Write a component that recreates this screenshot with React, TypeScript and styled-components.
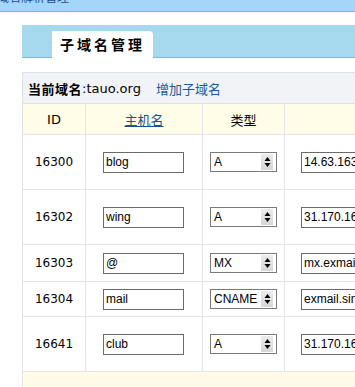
import React from 'react';
import styled, { createGlobalStyle } from 'styled-components';

const Global = createGlobalStyle`
  html, body { margin: 0; padding: 0; background: #fff; overflow: hidden; }
  body { font-family: "DejaVu Sans", "Noto Sans CJK SC", sans-serif; color: #000; }
`;

const Page = styled.div`
  width: 355px;
  height: 387px;
  overflow: hidden;
`;

const TopBar = styled.div`
  height: 11px;
  background: #a3d6f8;
  border-bottom: 1px solid #74b4dc;
  overflow: hidden;
`;

const TopText = styled.div`
  margin-top: -9px;
  margin-left: -3px;
  font-size: 12px;
  line-height: 14px;
  color: #1d4f8a;
  white-space: nowrap;
`;

const Main = styled.div`
  padding: 13px 0 0 22px;
`;

const TabBar = styled.div`
  width: 600px;
  height: 33px;
  box-sizing: border-box;
  background: #a6d9ee;
  border-bottom: 1px solid #7db7d5;
  display: flex;
  align-items: flex-end;
  padding-left: 30px;
`;

const Tab = styled.div`
  width: 101px;
  height: 27px;
  margin-bottom: -1px;
  box-sizing: border-box;
  background: #fff;
  border-top-right-radius: 4px;
  padding-left: 8px;
  font-family: "Noto Sans CJK SC", sans-serif;
  font-size: 14px;
  font-weight: 700;
  letter-spacing: 3px;
  line-height: 27px;
  white-space: nowrap;
`;

const Table = styled.div`
  margin-top: 14px;
  width: 600px;
  border-top: 1px solid #dde1e7;
`;

const InfoRow = styled.div`
  height: 31px;
  box-sizing: border-box;
  background: #f1f3f6;
  border-left: 1px solid #dde1e7;
  border-bottom: 1px solid #dde1e7;
  display: flex;
  align-items: center;
  padding-left: 5px;
  font-size: 13px;
  white-space: nowrap;
`;

const Bold = styled.span`
  font-family: "Noto Sans CJK SC", sans-serif;
  font-weight: 700;
  letter-spacing: 0.5px;
`;

const AddLink = styled.a`
  margin-left: 15px;
  color: #1a5a98;
  text-decoration: none;
  font-family: "Noto Sans CJK SC", sans-serif;
  font-size: 13px;
`;

const Row = styled.div<{ $h: number; $bg?: string }>`
  display: grid;
  grid-template-columns: 63px 117px 82px 1fr;
  height: ${p => p.$h + 1}px;
  box-sizing: border-box;
  border-bottom: 1px solid #e2e4ea;
  background: ${p => p.$bg || '#fff'};
`;

const Cell = styled.div<{ $center?: boolean; $pad?: number }>`
  border-left: 1px solid #e2e4ea;
  display: flex;
  align-items: center;
  justify-content: ${p => (p.$center ? 'center' : 'flex-start')};
  padding-left: ${p => p.$pad || 0}px;
  font-size: 12px;
  white-space: nowrap;
  overflow: hidden;
`;

const HeadLink = styled.a`
  color: #1b4f8f;
  text-decoration: underline;
  font-family: "Noto Sans CJK SC", sans-serif;
  font-size: 13px;
`;

const HeadText = styled.span`
  font-family: "DejaVu Sans", "Noto Sans CJK SC", sans-serif;
  font-size: 13px;
`;

const TextBox = styled.input<{ $w: number }>`
  width: ${p => p.$w}px;
  height: 21px;
  box-sizing: border-box;
  margin: 0;
  padding: 0 2px;
  border: 1px solid #6a6a6a;
  background: #fff;
  font-family: "Liberation Sans", Arial, sans-serif;
  font-size: 12px;
  color: #000;
  outline: none;
`;

const SelectBox = styled.div`
  width: 67px;
  height: 20px;
  box-sizing: border-box;
  border: 1px solid #7a7a7a;
  background: #fff;
  display: flex;
  align-items: center;
  font-family: "Liberation Sans", Arial, sans-serif;
  font-size: 12px;
`;

const SelectText = styled.span`
  flex: 1;
  padding-left: 3px;
  overflow: hidden;
`;

const Spinner = styled.div`
  width: 12px;
  height: 16px;
  margin-right: 3px;
  background: linear-gradient(#ececec, #d6d6d6);
  display: flex;
  align-items: center;
  justify-content: center;
`;

const Footer = styled.div`
  height: 40px;
  background: #fffbe6;
  border-left: 1px solid #e2e4ea;
`;

const rows = [
  { id: 16300, host: 'blog', type: 'A', value: '14.63.163.35', h: 54 },
  { id: 16302, host: 'wing', type: 'A', value: '31.170.160.15', h: 54 },
  { id: 16303, host: '@', type: 'MX', value: 'mx.exmail.qq.com', h: 36 },
  { id: 16304, host: 'mail', type: 'CNAME', value: 'exmail.sina.com', h: 34 },
  { id: 16641, host: 'club', type: 'A', value: '31.170.160.15', h: 54 },
];

function Select({ value }: { value: string }) {
  return (
    <SelectBox>
      <SelectText>{value}</SelectText>
      <Spinner>
        <svg width="7" height="12" viewBox="0 0 7 12">
          <path d="M3.5 1 L6.5 5 L0.5 5 Z" fill="#000" />
          <path d="M0.5 7 L6.5 7 L3.5 11 Z" fill="#000" />
        </svg>
      </Spinner>
    </SelectBox>
  );
}

export default function App() {
  return (
    <Page>
      <Global />
      <TopBar>
        <TopText>域名解析管理</TopText>
      </TopBar>
      <Main>
        <TabBar>
          <Tab>子域名管理</Tab>
        </TabBar>
        <Table>
          <InfoRow>
            <Bold>当前域名</Bold>
            <span>:tauo.org</span>
            <AddLink href="#">增加子域名</AddLink>
          </InfoRow>
          <Row $h={30} $bg="#fffde8">
            <Cell $center><HeadText>ID</HeadText></Cell>
            <Cell $center><HeadLink href="#">主机名</HeadLink></Cell>
            <Cell $center><HeadText>类型</HeadText></Cell>
            <Cell />
          </Row>
          {rows.map(r => (
            <Row key={r.id} $h={r.h}>
              <Cell $center>{r.id}</Cell>
              <Cell $pad={17}>
                <TextBox $w={81} defaultValue={r.host} readOnly />
              </Cell>
              <Cell $pad={7}>
                <Select value={r.type} />
              </Cell>
              <Cell $pad={16}>
                <TextBox $w={130} defaultValue={r.value} readOnly />
              </Cell>
            </Row>
          ))}
          <Footer />
        </Table>
      </Main>
    </Page>
  );
}
